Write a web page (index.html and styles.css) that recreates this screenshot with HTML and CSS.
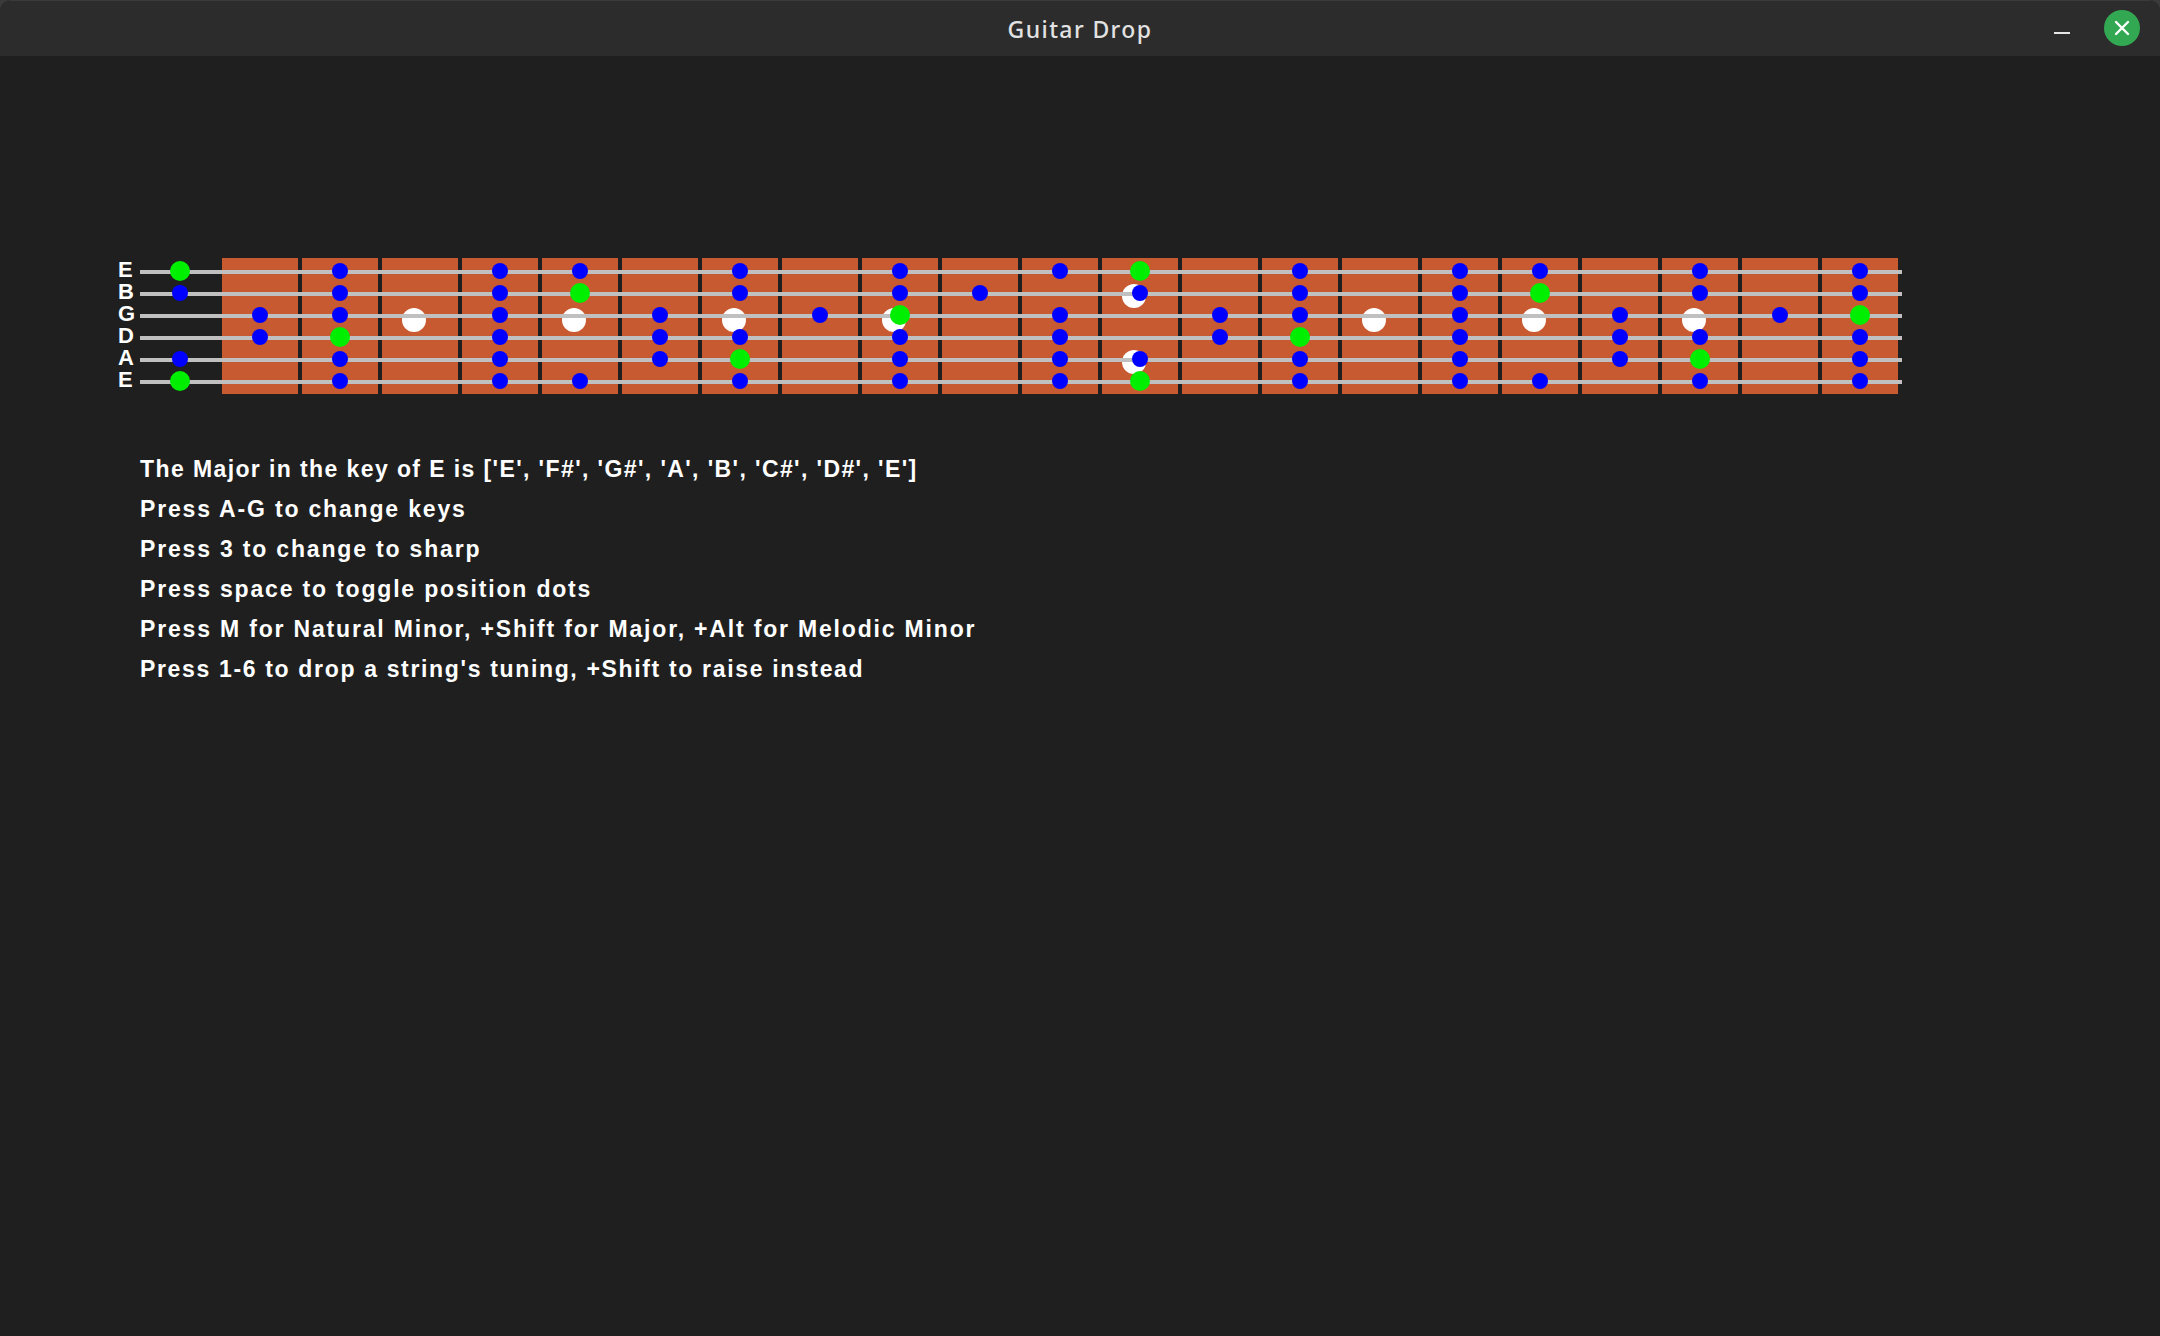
FILE: index.html
```html
<!DOCTYPE html>
<html lang="en">
<head>
<meta charset="utf-8">
<title>Guitar Drop</title>
<link rel="stylesheet" href="styles.css">
</head>
<body>
<div class="window">
  <header class="titlebar">
    <div></div>
    <div class="title">Guitar Drop</div>
    <div class="controls">
      <span class="minimize"></span>
      <span class="close">
        <svg width="16" height="16" viewBox="0 0 16 16"><path d="M2 2 L14 14 M14 2 L2 14" stroke="#fff" stroke-width="2.4" stroke-linecap="round" fill="none"/></svg>
      </span>
    </div>
  </header>
  <main class="content">
    <section class="board">
      <div class="labels">
        <div>E</div><div>B</div><div>G</div><div>D</div><div>A</div><div>E</div>
      </div>
      <div class="neck">
        <div class="frets">
          <span></span><span></span><span></span><span></span><span></span><span></span><span></span>
          <span></span><span></span><span></span><span></span><span></span><span></span><span></span>
          <span></span><span></span><span></span><span></span><span></span><span></span><span></span>
        </div>
        <div class="markers">
          <span></span><span></span><span></span><span class="m1"><i></i></span><span></span><span class="m1"><i></i></span><span></span><span class="m1"><i></i></span><span></span><span class="m1"><i></i></span><span></span><span></span>
          <span class="m2"><i></i><i></i></span><span></span><span></span><span class="m1"><i></i></span><span></span><span class="m1"><i></i></span><span></span><span class="m1"><i></i></span><span></span><span></span>
        </div>
        <div class="strings">
          <div class="string"><i class="r"></i><i></i><i class="n"></i><i></i><i class="n"></i><i class="n"></i><i></i><i class="n"></i><i></i><i class="n"></i><i></i><i class="n"></i><i class="r"></i><i></i><i class="n"></i><i></i><i class="n"></i><i class="n"></i><i></i><i class="n"></i><i></i><i class="n"></i></div>
          <div class="string"><i class="n"></i><i></i><i class="n"></i><i></i><i class="n"></i><i class="r"></i><i></i><i class="n"></i><i></i><i class="n"></i><i class="n"></i><i></i><i class="n"></i><i></i><i class="n"></i><i></i><i class="n"></i><i class="r"></i><i></i><i class="n"></i><i></i><i class="n"></i></div>
          <div class="string"><i></i><i class="n"></i><i class="n"></i><i></i><i class="n"></i><i></i><i class="n"></i><i></i><i class="n"></i><i class="r"></i><i></i><i class="n"></i><i></i><i class="n"></i><i class="n"></i><i></i><i class="n"></i><i></i><i class="n"></i><i></i><i class="n"></i><i class="r"></i></div>
          <div class="string"><i></i><i class="n"></i><i class="r"></i><i></i><i class="n"></i><i></i><i class="n"></i><i class="n"></i><i></i><i class="n"></i><i></i><i class="n"></i><i></i><i class="n"></i><i class="r"></i><i></i><i class="n"></i><i></i><i class="n"></i><i class="n"></i><i></i><i class="n"></i></div>
          <div class="string"><i class="n"></i><i></i><i class="n"></i><i></i><i class="n"></i><i></i><i class="n"></i><i class="r"></i><i></i><i class="n"></i><i></i><i class="n"></i><i class="n"></i><i></i><i class="n"></i><i></i><i class="n"></i><i></i><i class="n"></i><i class="r"></i><i></i><i class="n"></i></div>
          <div class="string"><i class="r"></i><i></i><i class="n"></i><i></i><i class="n"></i><i class="n"></i><i></i><i class="n"></i><i></i><i class="n"></i><i></i><i class="n"></i><i class="r"></i><i></i><i class="n"></i><i></i><i class="n"></i><i class="n"></i><i></i><i class="n"></i><i></i><i class="n"></i></div>
        </div>
      </div>
    </section>
    <section class="help">
      <p class="scale">The Major in the key of E is ['E', 'F#', 'G#', 'A', 'B', 'C#', 'D#', 'E']</p>
      <p>Press A-G to change keys</p>
      <p>Press 3 to change to sharp</p>
      <p>Press space to toggle position dots</p>
      <p>Press M for Natural Minor, +Shift for Major, +Alt for Melodic Minor</p>
      <p class="tight">Press 1-6 to drop a string's tuning, +Shift to raise instead</p>
    </section>
  </main>
</div>
</body>
</html>
```
FILE: styles.css
```css
html, body {
  margin: 0;
  padding: 0;
  background: #3a3a3a;
}

.window {
  width: 2160px;
  height: 1336px;
  background: #1f1f1f;
  border-radius: 12px 12px 0 0;
  overflow: hidden;
}

.titlebar {
  height: 56px;
  background: #2c2c2c;
  box-shadow: inset 0 1px 0 #3b3b3b;
  display: grid;
  grid-template-columns: 1fr auto 1fr;
  align-items: center;
}

.title {
  font-family: "Noto Sans", "Open Sans", sans-serif;
  font-size: 23px;
  font-weight: 500;
  letter-spacing: 1.4px;
  color: #e2e2e2;
  padding-top: 1px;
}

.controls {
  display: flex;
  justify-content: flex-end;
  align-items: center;
  gap: 34px;
  padding-right: 20px;
}

.minimize {
  width: 16px;
  height: 2px;
  background: #e6e6e6;
  margin-top: 9px;
}

.close {
  width: 36px;
  height: 36px;
  border-radius: 50%;
  background: #33a852;
  display: flex;
  align-items: center;
  justify-content: center;
}

.content {
  padding: 202px 0 0 118px;
}

.board {
  display: flex;
}

.labels {
  width: 22px;
  padding-top: 1px;
  font-family: "Liberation Sans", Arial, sans-serif;
  font-weight: bold;
  font-size: 22px;
  line-height: 22px;
  color: #ffffff;
}

.neck {
  display: grid;
  grid-template-columns: 1762px;
  grid-template-rows: 136px;
}

.frets, .markers, .strings {
  grid-area: 1 / 1;
}

.frets {
  display: flex;
  gap: 4px;
  margin-left: 82px;
}

.frets span {
  width: 76px;
  background: #c85a32;
}

.markers {
  display: grid;
  grid-template-columns: repeat(22, 80px);
}

.markers span {
  display: flex;
  flex-direction: column;
  align-items: center;
}

.markers i {
  display: block;
  width: 24px;
  height: 24px;
  border-radius: 50%;
  background: #ffffff;
  margin-right: 12px;
}

.markers .m1 {
  padding-top: 50px;
}

.markers .m2 {
  padding-top: 26px;
  gap: 42px;
}

.strings {
  margin-top: 3px;
  align-self: start;
}

.string {
  height: 22px;
  display: grid;
  grid-template-columns: repeat(22, 80px);
  align-items: center;
  justify-items: center;
  background: linear-gradient(#c0c0c0, #c0c0c0) left center / 100% 4px no-repeat;
}

.string i {
  display: block;
}

.string .n {
  width: 16px;
  height: 16px;
  border-radius: 50%;
  background: #0000ff;
  margin-bottom: 4px;
}

.string .r {
  width: 20px;
  height: 20px;
  border-radius: 50%;
  background: #00ee00;
  margin-bottom: 4px;
}

.help {
  margin: 55px 0 0 22px;
  font-family: "Liberation Sans", Arial, sans-serif;
  font-weight: bold;
  font-size: 23px;
  line-height: 40px;
  letter-spacing: 1.82px;
  color: #ffffff;
}

.help p {
  margin: 0;
}

.help .scale {
  letter-spacing: 1.4px;
}

.help .tight {
  letter-spacing: 1.66px;
}
```
